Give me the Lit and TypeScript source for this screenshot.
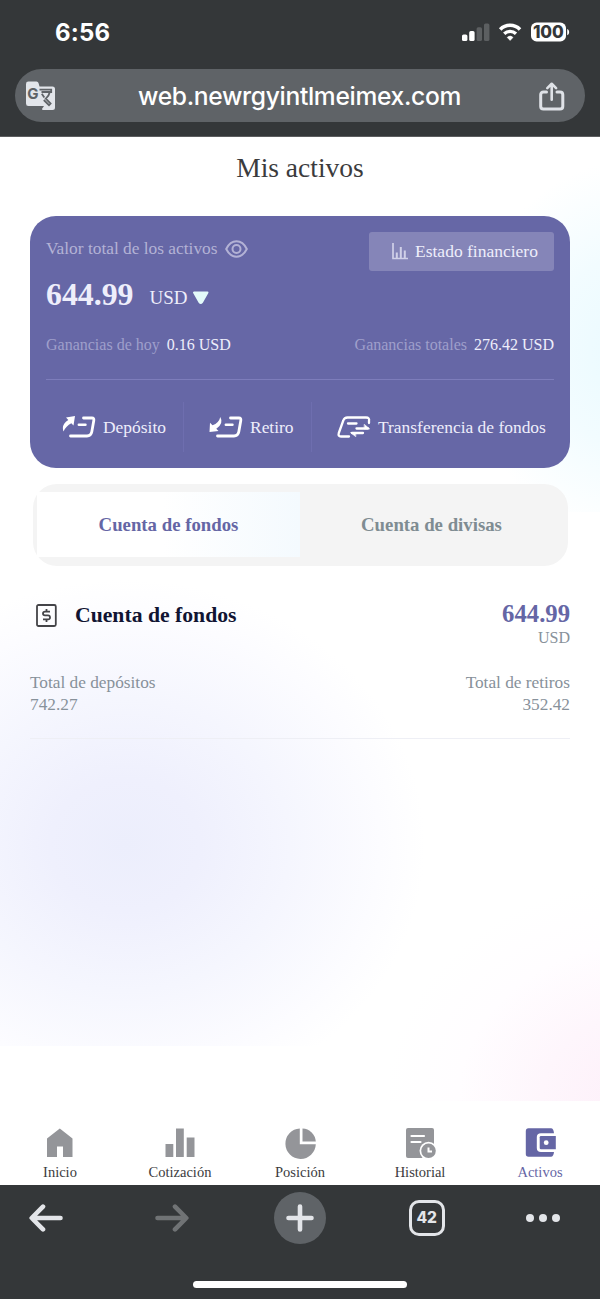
import { LitElement, html, svg, css } from "lit";
import { customElement } from "lit/decorators.js";

@customElement("status-bar")
class StatusBar extends LitElement {
  static styles = css`
    :host { display: flex; justify-content: space-between; align-items: center; height: 69px; box-sizing: border-box; padding: 0 30px 4px 55px; color: #fff; font-family: Inter, sans-serif; }
    .time { font-size: 24px; font-weight: 700; letter-spacing: 0.2px; }
    svg { display: block; }
    .battery-text { font: 800 17px Inter, sans-serif; letter-spacing: -0.1px; }
  `;
  render() {
    return html`
      <span class="time">6:56</span>
      <svg width="108" height="24" viewBox="0 0 108 24">
        <rect x="0" y="13.500" width="5.400" height="6.600" rx="1.600" fill="#fff" />
        <rect x="7.200" y="10.100" width="5.400" height="10" rx="1.600" fill="#fff" />
        <rect x="14.600" y="6.300" width="5.400" height="13.800" rx="1.600" fill="#5c5f61" />
        <rect x="22" y="2.500" width="5.400" height="17.600" rx="1.600" fill="#5c5f61" />
        <path d="M38.200 8.400a14 14 0 0 1 19.800 0" fill="none" stroke="#fff" stroke-width="3.600" />
        <path d="M42.200 12.800a8.600 8.600 0 0 1 11.800 0" fill="none" stroke="#fff" stroke-width="3.300" />
        <path d="M45.200 16.400a4.200 4.200 0 0 1 5.800 0l-2.900 3z" fill="#fff" stroke="#fff" stroke-width=".6" stroke-linejoin="round" />
        <rect x="69" y="1.500" width="35" height="19" rx="5.600" fill="#fff" />
        <path d="M105.200 8c2.600.6 2.600 5.600 0 6.200z" fill="#fff" />
        <text class="battery-text" x="86.300" y="17.200" text-anchor="middle" fill="#343739">100</text>
      </svg>
    `;
  }
}

@customElement("address-bar")
class AddressBar extends LitElement {
  static styles = css`
    :host { display: flex; align-items: center; justify-content: space-between; height: 53px; margin: 0 15px; padding: 0 20px 0 11px; border-radius: 27px; background: #5f6367; color: #fff; font-family: Inter, sans-serif; }
    .url { font-size: 24.600px; font-weight: 500; letter-spacing: -0.320px; line-height: 50px; margin-left: 4px; white-space: nowrap; }
    .g { font: 700 15px Inter, sans-serif; }
    svg { display: block; }
  `;
  render() {
    return html`
      <svg width="30" height="30" viewBox="0 0 30 30">
        <path d="M2.400 .5H10.500Q12 .5 12.500 2L13.500 5.500H26.500Q29 5.500 29 8V26.500Q29 29 26.500 29H16.500L14.600 25H2.400Q0 25 0 22.500V2.900Q0 .5 2.400 .5Z" fill="#e2e5ea" />
        <path d="M13.500 8.700H25.200V11H23.800Q23 15 19.800 17.600L24.600 22.500L23 24.200L17.800 19M15.500 11H23.800M15.800 12.800L18.300 16.500" fill="none" stroke="#5f6367" stroke-width="1.800" />
        <path d="M13.600 25L15.400 28.800L18 25Z" fill="#5f6367" />
        <text class="g" x="1.200" y="18" fill="#5f6367">G</text>
      </svg>
      <span class="url">web.newrgyintlmeimex.com</span>
      <svg width="26" height="30" viewBox="0 0 26 30" fill="none" stroke="#dfe2e7" stroke-width="3" stroke-linecap="round" stroke-linejoin="round">
        <path d="M7.500 11H4.500Q1.700 11 1.700 13.800V25.300Q1.700 28.100 4.500 28.100H21Q23.800 28.100 23.800 25.300V13.800Q23.800 11 21 11H18" />
        <path d="M12.700 18.800V3.300M8.300 7.100L12.700 2.800L17.100 7.100" stroke-width="2.600" />
      </svg>
    `;
  }
}

@customElement("assets-card")
class AssetsCard extends LitElement {
  static styles = css`
    :host { display: flex; flex-direction: column; box-sizing: border-box; height: 252px; margin: 0 30px; padding: 16px; border-radius: 26px; background: #6667a6; color: #eeeefb; }
    svg { display: block; flex: none; }
    .head { display: flex; justify-content: space-between; align-items: flex-start; height: 104px; }
    .label { display: flex; align-items: center; gap: 8px; height: 33px; font-size: 17.350px; color: #b3b2d5; white-space: nowrap; }
    .total { display: flex; align-items: baseline; margin-top: 12px; height: 36px; }
    .value { font-size: 31.800px; line-height: 36px; font-weight: 700; }
    .unit { font-size: 19px; margin: 0 5px 0 16px; position: relative; top: -1px; }
    .statement { display: flex; align-items: center; gap: 7px; box-sizing: border-box; width: 185px; height: 39px; padding-left: 23px; border-radius: 3px; background: #8585b8; font-size: 17.500px; white-space: nowrap; }
    .gains { display: flex; justify-content: space-between; height: 44px; line-height: 20px; font-size: 16px; white-space: nowrap; }
    .muted { color: #9f9fcb; margin-right: 7px; }
    .actions { display: flex; align-items: center; border-top: 1px solid #7d7dbb; padding-top: 22px; height: 50px; }
    .action { display: flex; align-items: center; height: 50px; font-size: 17.450px; gap: 7px; white-space: nowrap; box-sizing: border-box; border-right: 1px solid #6e6eaf; }
    .deposit { width: 138px; padding-left: 16px; }
    .withdraw { width: 128px; padding-left: 25px; }
    .transfer { padding-left: 25px; border-right: 0; }
  `;
  render() {
    const slip = svg`<path d="M21.500 2H30Q32.200 2 31.800 4.500L29.800 15.800Q29 20 25 20H8.500" fill="none" stroke="#fff" stroke-width="2.800" stroke-linecap="round" stroke-linejoin="round"/><path d="M16.800 8.700H23.500" stroke="#fff" stroke-width="2.400" stroke-linecap="round"/>`;
    return html`
      <div class="head">
        <div>
          <div class="label">
            Valor total de los activos
            <svg width="23" height="18" viewBox="0 0 23 18" fill="none" stroke="#b3b2d5" stroke-width="2">
              <path d="M1.200 9Q5 1.300 11.500 1.300T21.800 9Q18 16.700 11.500 16.700T1.200 9Z" /><circle cx="11.500" cy="9" r="4" />
            </svg>
          </div>
          <div class="total">
            <span class="value">644.99</span><span class="unit">USD</span>
            <svg width="18" height="14" viewBox="0 0 18 14"><path d="M2 1.500H15.500L10 11.200Q8.750 13 7.500 11.200Z" fill="#e3fafa" stroke="#e3fafa" stroke-width="2" stroke-linejoin="round" /></svg>
          </div>
        </div>
        <div class="statement">
          <svg width="16" height="17" viewBox="0 0 16 17" fill="none" stroke="#d0d0e8" stroke-width="1.700">
            <path d="M1 0V15.500H16" /><path d="M4.800 15V9.500M8.800 15V4M12.800 15V7.500" stroke-width="2" />
          </svg>
          <span>Estado financiero</span>
        </div>
      </div>
      <div class="gains">
        <div><span class="muted">Ganancias de hoy</span>0.16 USD</div>
        <div><span class="muted">Ganancias totales</span>276.42 USD</div>
      </div>
      <div class="actions">
        <div class="action deposit">
          <svg width="34" height="22" viewBox="0 0 34 22">${slip}<path d="M4 1.500L13 0L11.500 9.500L9.300 7.300Q4 10 1.500 15.500Q-1 8.500 6.300 4Z" fill="#fff" /></svg>
          <span>Depósito</span>
        </div>
        <div class="action withdraw">
          <svg width="34" height="22" viewBox="0 0 34 22">${slip}<path d="M.5 16L1 6.800L3.500 9.300Q10 7 11.300 1Q15 7.500 7.300 12.800L9.500 15Z" fill="#fff" /></svg>
          <span>Retiro</span>
        </div>
        <div class="action transfer">
          <svg width="34" height="22" viewBox="0 0 34 22" fill="none" stroke="#fff" stroke-width="2.300" stroke-linecap="round" stroke-linejoin="round">
            <path d="M12 20.500H4Q.8 20.500 1.800 17L6.300 4.500Q7.300 1.500 10.500 1.500H29Q32.800 1.500 32 5V7M11 7.500H19.500M19.500 12.500H31M26 17H15" />
            <path d="M27.500 8.500L32.700 12.900H27.500ZM18.500 20.500L13.500 16.600H18.500Z" fill="#fff" stroke-width=".6" />
          </svg>
          <span>Transferencia de fondos</span>
        </div>
      </div>
    `;
  }
}

@customElement("account-tabs")
class AccountTabs extends LitElement {
  static styles = css`
    :host { display: grid; grid-template-columns: 1fr 1fr; box-sizing: border-box; height: 82px; margin: 16px 32px 0 33px; padding: 8px 5px 9px 4px; border-radius: 24px; background: #f4f4f4; }
    .tab { display: flex; align-items: center; justify-content: center; font-size: 18.800px; font-weight: 700; color: #7f8c92; white-space: nowrap; }
    .active { color: #6566a5; background: linear-gradient(90deg, #fff 48%, #f4fafe); }
  `;
  render() {
    return html`<div class="tab active">Cuenta de fondos</div><div class="tab">Cuenta de divisas</div>`;
  }
}

@customElement("account-summary")
class AccountSummary extends LitElement {
  static styles = css`
    :host { display: block; box-sizing: border-box; height: 173px; margin: 0 30px; padding-top: 32px; border-bottom: 1px solid #eeeff5; color: #87919a; }
    .row { display: flex; justify-content: space-between; }
    .name { display: flex; align-items: center; gap: 18px; height: 34px; padding-left: 6px; font-size: 21.700px; font-weight: 700; color: #111432; }
    .right { text-align: right; }
    .amount { font-size: 24.700px; line-height: 31px; font-weight: 700; color: #6566a5; }
    .unit { font-size: 16px; line-height: 18px; }
    .totals { margin-top: 25px; font-size: 17.300px; line-height: 21.500px; }
  `;
  render() {
    return html`
      <div class="row">
        <div class="name">
          <svg width="21" height="23" viewBox="0 0 21 23" fill="none" stroke="#444448" stroke-width="1.800">
            <rect x="1" y="1" width="18.800" height="21" rx="1.500" />
            <path d="M14 7.700H9Q7 7.700 7 9.500T9 11.400H12Q14 11.400 14 13.400T12 15.300H7M10.500 5V7.500M10.500 15.500V18" />
          </svg>
          Cuenta de fondos
        </div>
        <div class="right"><div class="amount">644.99</div><div class="unit">USD</div></div>
      </div>
      <div class="row totals">
        <div>Total de depósitos<br />742.27</div>
        <div class="right">Total de retiros<br />352.42</div>
      </div>
    `;
  }
}

const navItems = [
  { label: "Inicio", icon: svg`<path d="M3 10.500L15.800 .5L28.500 10.500V29H19V18.500H13V29H3Z" fill="#949599"/>` },
  { label: "Cotización", icon: svg`<path d="M1.500 16H9.300V29H1.500ZM12 .5H19.800V29H12ZM22.700 9.500H30.500V29H22.700Z" fill="#949599"/>` },
  { label: "Posición", icon: svg`<path d="M15.800 .5V16.300H31.800A15.200 15.200 0 1 1 15.800 .5Z" fill="#949599"/><path d="M18.500 .5A14 14 0 0 1 31.800 13.500H18.500Z" fill="#949599"/>` },
  { label: "Historial", icon: svg`<rect x="2" y="0" width="28" height="30" rx="2" fill="#949599"/><path d="M7.500 8H20M7.500 14H16.500" stroke="#fff" stroke-width="2.200" stroke-linecap="round"/><circle cx="24.500" cy="22.800" r="9" fill="#fff"/><circle cx="24.500" cy="22.800" r="7.300" fill="#949599"/><path d="M24.500 19.500V23.500H28" fill="none" stroke="#fff" stroke-width="2"/>` },
  { label: "Activos", icon: svg`<path d="M4.500 .3H27Q29.500 .3 30 5.200H17Q12.800 5.200 12.800 9V20Q12.800 24 17 24H30Q29.500 28.800 27 28.800H4.500Q1.800 28.800 1.800 26V3.200Q1.800 .3 4.500 .3Z" fill="#6566a5"/><path d="M17 8H31.800V21.200H17Q15.700 21.200 15.700 20V9.300Q15.700 8 17 8Z" fill="#6566a5"/><circle cx="22.200" cy="14.700" r="2.400" fill="#fff"/>` },
];

@customElement("page-nav")
class PageNav extends LitElement {
  static styles = css`
    :host { display: grid; grid-template-columns: repeat(5, 1fr); box-sizing: border-box; height: 84px; padding-top: 26.500px; background: #fff; }
    .item { display: flex; flex-direction: column; align-items: center; font-size: 14.500px; line-height: 18px; color: #3b3b3d; }
    .active { color: #6566a5; }
    svg { display: block; margin-bottom: 4.500px; overflow: visible; }
  `;
  render() {
    return navItems.map(
      (n, i) => html`<div class="item ${i === 4 ? "active" : ""}"><svg width="32" height="31" viewBox="0 0 32 31">${n.icon}</svg>${n.label}</div>`
    );
  }
}

@customElement("browser-toolbar")
class BrowserToolbar extends LitElement {
  static styles = css`
    :host { display: flex; flex-direction: column; align-items: center; justify-content: space-between; box-sizing: border-box; height: 114px; padding: 6px 0 11px; background: #343739; }
    .buttons { display: grid; grid-template-columns: 91px 163px 92px 161px 72px; justify-content: start; align-items: center; justify-items: center; width: 600px; box-sizing: border-box; height: 53px; }
    .plus { display: flex; align-items: center; justify-content: center; width: 52px; height: 52px; border-radius: 50%; background: #5f6367; }
    .tabs { display: flex; align-items: center; justify-content: center; box-sizing: border-box; width: 36px; height: 36px; border: 3.500px solid #e3e5e9; border-radius: 10px; color: #e3e5e9; font: 800 15.500px Inter, sans-serif; letter-spacing: -0.3px; }
    .home { width: 214px; height: 7px; border-radius: 4px; background: #fff; }
    svg { display: block; }
  `;
  render() {
    return html`
      <div class="buttons">
        <svg width="35" height="28" viewBox="0 0 35 28" fill="none" stroke="#e3e5e9" stroke-width="4.600" stroke-linecap="round" stroke-linejoin="round"><path d="M32.500 14H4M15 2.600L3.700 14L15 25.400" /></svg>
        <svg width="35" height="28" viewBox="0 0 35 28" fill="none" stroke="#707375" stroke-width="4.600" stroke-linecap="round" stroke-linejoin="round"><path d="M2.500 14H31M20 2.600L31.300 14L20 25.400" /></svg>
        <div class="plus"><svg width="28" height="28" viewBox="0 0 28 28" stroke="#e3e5e9" stroke-width="4.600" stroke-linecap="round"><path d="M14 2.500V25.500M2.500 14H25.500" /></svg></div>
        <div class="tabs">42</div>
        <svg width="34" height="8" viewBox="0 0 34 8" fill="#e3e5e9"><circle cx="4" cy="4" r="4" /><circle cx="17" cy="4" r="4" /><circle cx="30" cy="4" r="4" /></svg>
      </div>
      <div class="home"></div>
    `;
  }
}

@customElement("app-root")
class AppRoot extends LitElement {
  static styles = css`
    :host { display: flex; flex-direction: column; width: 600px; height: 1299px; overflow: hidden; font-family: "Liberation Serif", serif; background: #fff; }
    .chrome { height: 137px; border-bottom: 1px solid #5c5d5f; box-sizing: border-box; background: #343739; }
    .page {
      flex: 1; display: flex; flex-direction: column;
      background:
        radial-gradient(ellipse 300px 265px at 125px 708px, #eceefc 0%, #eff0fd 25%, #f5f6fe 55%, #fcfcff 85%, #fff0 100%) 0 0 / 600px 909px no-repeat,
        radial-gradient(ellipse 160px 190px at 630px 214px, #eafaff 0%, #f2fcff 50%, #fff0 100%) 0 0 / 600px 375px no-repeat,
        radial-gradient(ellipse 260px 220px at 645px 964px, #fdeff9 0%, #fef6fc 40%, #fffdff 72%, #fff0 100%) 0 0 / 600px 964px no-repeat,
        #fff;
    }
    .title { margin: 0; height: 79px; line-height: 61px; font-size: 27.500px; font-weight: 400; text-align: center; color: #3b3b3d; }
    page-nav { margin-top: auto; }
  `;
  render() {
    return html`
      <div class="chrome"><status-bar></status-bar><address-bar></address-bar></div>
      <div class="page">
        <h1 class="title">Mis activos</h1>
        <assets-card></assets-card>
        <account-tabs></account-tabs>
        <account-summary></account-summary>
        <page-nav></page-nav>
      </div>
      <browser-toolbar></browser-toolbar>
    `;
  }
}
